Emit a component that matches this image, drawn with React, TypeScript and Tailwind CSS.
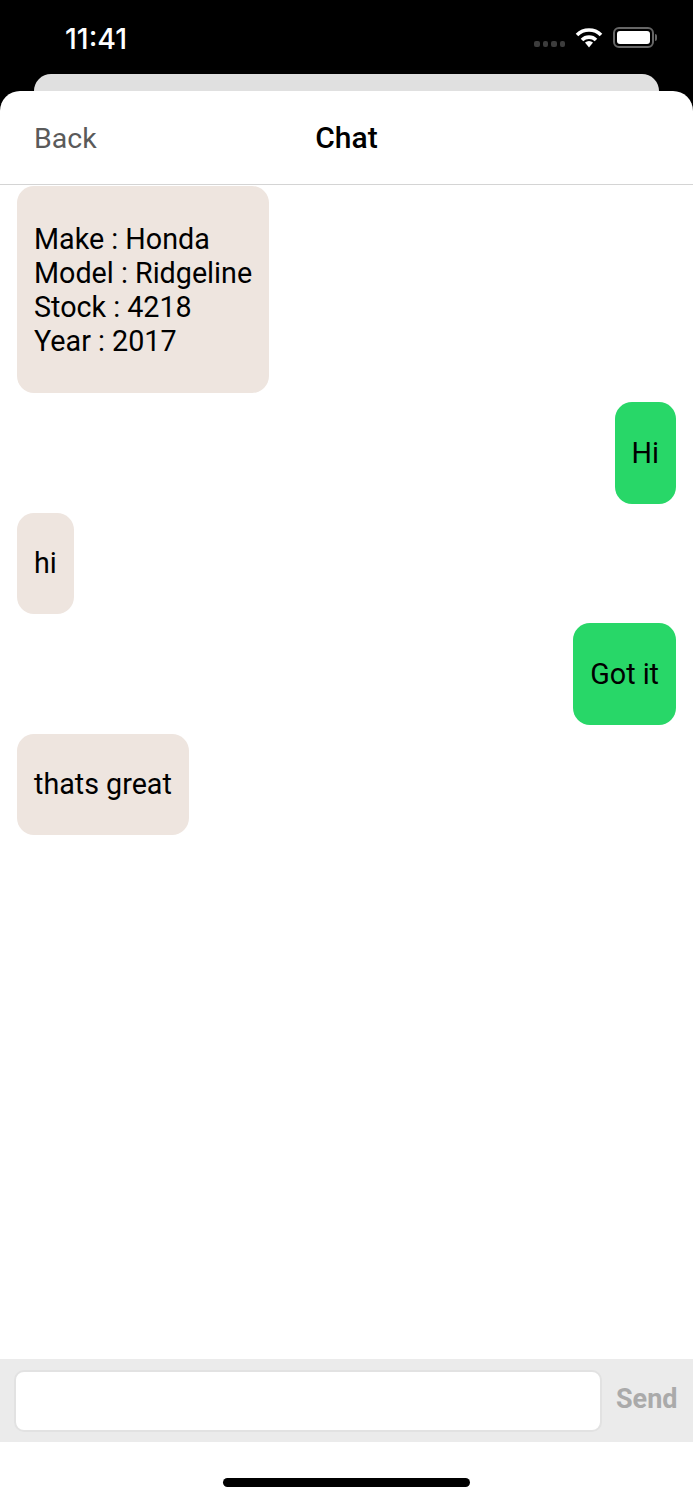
import React from 'react';

const font = "[font-family:Roboto,'Liberation_Sans',sans-serif]";

function StatusIcons() {
  return (
    <div className="flex items-center">
      <div className="flex gap-[3px] mt-[13px]">
        <span className="w-[5.5px] h-[6px] rounded-[2px] bg-[#3c3c3c]" />
        <span className="w-[5.5px] h-[6px] rounded-[2px] bg-[#3c3c3c]" />
        <span className="w-[5.5px] h-[6px] rounded-[2px] bg-[#3c3c3c]" />
        <span className="w-[5.5px] h-[6px] rounded-[2px] bg-[#3c3c3c]" />
      </div>
      <svg className="ml-[10px]" width="28" height="21" viewBox="0 0 28 21" fill="none">
        <path d="M2 8 A17 17 0 0 1 26 8" stroke="#fff" strokeWidth="3.6" strokeLinecap="butt" />
        <path d="M7 13 A10 10 0 0 1 21 13" stroke="#fff" strokeWidth="3.6" />
        <path d="M10 15.5 A6 6 0 0 1 18 15.5 L14 20.5 Z" fill="#fff" />
      </svg>
      <div className="ml-[10px] w-[41px] h-[21px] rounded-[6px] border-2 border-[#666] p-[2px]">
        <div className="w-full h-full rounded-[3px] bg-white" />
      </div>
      <span className="ml-[1px] w-[2px] h-[7px] rounded-r-[2px] bg-[#666]" />
    </div>
  );
}

function Bubble({ mine, tall, children }: { mine?: boolean; tall?: boolean; children: React.ReactNode }) {
  return (
    <div className={mine ? 'flex justify-end' : 'flex justify-start'}>
      <div
        className={
          (mine ? 'bg-[#28d768] ' : 'bg-[#eee5df] ') +
          (tall ? 'py-[35.5px] ' : 'py-[33.75px] ') +
          'rounded-[17px] px-[17px] text-[28.7px] leading-[34px] text-black'
        }
      >
        {children}
      </div>
    </div>
  );
}

export default function App() {
  return (
    <div className={`${font} w-[693px] h-[1500px] bg-black flex flex-col overflow-hidden`}>
      <div className="h-[74px] shrink-0 flex items-start justify-between pl-[65px] pr-[36px] pt-[21px]">
        <span className="mt-[1px] text-white text-[28.5px] leading-[34px] font-medium [font-family:Inter,sans-serif]">11:41</span>
        <div className="pt-[6px]">
          <StatusIcons />
        </div>
      </div>
      <div className="mx-[34px] h-[17px] shrink-0 bg-[#e0e0e0] rounded-t-[17px]" />
      <div className="flex-1 bg-white rounded-t-[20px] flex flex-col min-h-0">
        <div className="h-[94px] shrink-0 border-b border-[#d4d4d4] flex items-center relative pl-[34px]">
          <span className="pt-[3px] text-[28.5px] text-[#5a5a5a]">Back</span>
          <span className="absolute left-0 right-0 text-center text-[30px] font-medium text-black">Chat</span>
        </div>
        <div className="flex-1 flex flex-col gap-[9px] px-[17px] pt-[1px]">
          <Bubble tall>
            <div>Make : Honda</div>
            <div>Model : Ridgeline</div>
            <div>Stock : 4218</div>
            <div>Year : 2017</div>
          </Bubble>
          <Bubble mine>Hi</Bubble>
          <Bubble>hi</Bubble>
          <Bubble mine>Got it</Bubble>
          <Bubble>thats great</Bubble>
        </div>
        <div className="h-[83px] shrink-0 bg-[#ebebeb] flex items-center pl-[14px]">
          <div className="w-[588px] h-[62px] mt-[1px] bg-white rounded-[10px] border-2 border-[#e2e2e2]" />
          <span className="ml-[14px] mb-[2px] text-[27px] font-bold text-[#aaaaaa]">Send</span>
        </div>
        <div className="h-[58px] shrink-0 flex justify-center pt-[36px]">
          <div className="w-[247px] h-[9px] rounded-full bg-black" />
        </div>
      </div>
    </div>
  );
}
